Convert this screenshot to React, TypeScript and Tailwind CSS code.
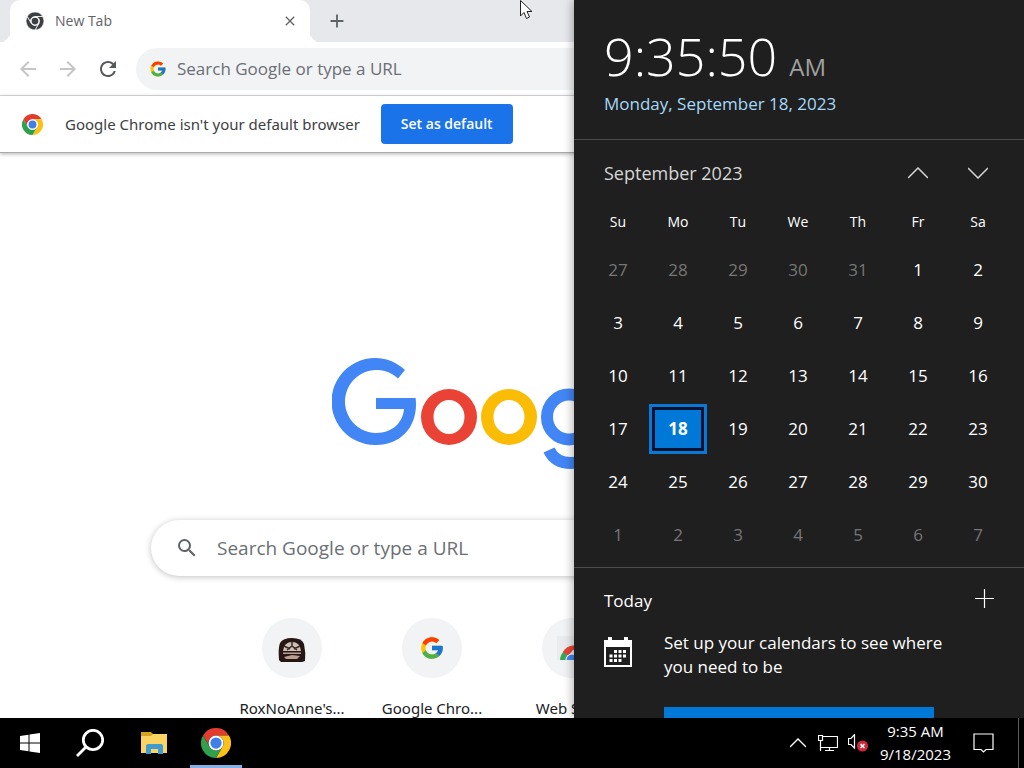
import type { ReactNode } from "react";
import { FcGoogle } from "react-icons/fc";
import { MdArrowBack, MdArrowForward, MdRefresh, MdSearch, MdClose, MdAdd } from "react-icons/md";

const WEEKDAYS = ["Su", "Mo", "Tu", "We", "Th", "Fr", "Sa"];

const WEEKS = [
  [27, 28, 29, 30, 31, 1, 2],
  [3, 4, 5, 6, 7, 8, 9],
  [10, 11, 12, 13, 14, 15, 16],
  [17, 18, 19, 20, 21, 22, 23],
  [24, 25, 26, 27, 28, 29, 30],
  [1, 2, 3, 4, 5, 6, 7],
];

function ChromeLogo({ className, mono = false }: { className?: string; mono?: boolean }) {
  const [red, yellow, green, blue] = mono
    ? ["#3c4043", "#3c4043", "#3c4043", "#3c4043"]
    : ["#e33b2e", "#fbc116", "#2da14c", "#3f7fe8"];
  const gap = mono ? { stroke: "#fff", strokeWidth: 2 } : {};
  return (
    <svg viewBox="0 0 48 48" className={className} aria-hidden="true">
      <path fill={red} {...gap} d="M24 12H44.8A24 24 0 0 0 3.2 12L13.6 30A12 12 0 0 1 24 12Z" />
      <path fill={yellow} {...gap} d="M34.4 30L24 48A24 24 0 0 0 44.8 12H24A12 12 0 0 1 34.4 30Z" />
      <path fill={green} {...gap} d="M13.6 30L3.2 12A24 24 0 0 0 24 48L34.4 30A12 12 0 0 1 13.6 30Z" />
      <circle cx="24" cy="24" r={mono ? 11 : 12} fill="#fff" />
      <circle cx="24" cy="24" r="9" fill={blue} />
    </svg>
  );
}

function GoogleLogo() {
  return (
    <svg viewBox="0 0 340 115" className="w-[340px] h-[115px] shrink-0" role="img" aria-label="Google">
      <path
        fill="#4285f4"
        d="M73 13A43.5 43.5 0 1 0 44 88C68 88 84 71 84 47.500Q84 44 83.600 41H44V52H72C71 65 61 76 44 76A31.500 31.500 0 1 1 66 21.500Z"
      />
      <path
        fill="#ea4335"
        fillRule="evenodd"
        d="M89 60a28 28 0 1 0 56 0a28 28 0 1 0-56 0M101.500 60a15.500 17 0 1 1 31 0a15.500 17 0 1 1-31 0"
      />
      <path
        fill="#fbbc05"
        fillRule="evenodd"
        d="M149 60a28 28 0 1 0 56 0a28 28 0 1 0-56 0M161.500 60a15.500 17 0 1 1 31 0a15.500 17 0 1 1-31 0"
      />
      <g fill="none" stroke="#4285f4" strokeWidth="12">
        <ellipse cx="237" cy="60" rx="22" ry="22.500" />
        <path d="M260 34V84C260 98 252 106 239 106Q223 106 217 93" />
      </g>
      <path stroke="#34a853" strokeWidth="12" d="M281 3V86" />
      <path fill="none" stroke="#ea4335" strokeWidth="12" d="M300 68L333 53A21 22 0 1 0 334 75" />
    </svg>
  );
}

function Shortcut({ label, children }: { label: string; children: ReactNode }) {
  return (
    <a href="#" className="flex flex-col items-center gap-5 font-['Noto_Sans',sans-serif] text-[15px] leading-5 text-[#202124]">
      <span className="flex h-15 w-15 items-center justify-center rounded-full bg-[#f1f3f4]">{children}</span>
      <span className="whitespace-nowrap">{label}</span>
    </a>
  );
}

function Browser() {
  return (
    <div className="flex h-full flex-col bg-white">
      {/* Tab strip */}
      <div className="flex h-[42px] shrink-0 items-end bg-[#e7e8eb] pl-2.5">
        <div className="relative flex h-full w-[300px] items-center rounded-t-[10px] bg-white pl-4 pr-3 before:absolute before:-left-2.5 before:bottom-0 before:h-2.5 before:w-2.5 before:rounded-br-[10px] before:bg-[#e7e8eb] before:shadow-[4px_4px_0_#fff] after:absolute after:-right-2.5 after:bottom-0 after:h-2.5 after:w-2.5 after:rounded-bl-[10px] after:bg-[#e7e8eb] after:shadow-[-4px_4px_0_#fff]">
          <ChromeLogo mono className="h-[18px] w-[18px]" />
          <span className="ml-[11px] flex-1 text-sm text-[#5f6368]">New Tab</span>
          <button aria-label="Close tab" className="text-[#5f6368]">
            <MdClose className="h-4 w-4" />
          </button>
        </div>
        <button aria-label="New tab" className="flex h-full w-[54px] items-center justify-center text-[#5f6368]">
          <MdAdd className="h-[22px] w-[22px]" />
        </button>
      </div>

      {/* Toolbar */}
      <div className="z-10 flex h-[54px] shrink-0 items-center border-b border-[#dadce0] bg-white pl-4 pr-2.5">
        <div className="flex w-30 items-center gap-4">
          <button aria-label="Back" className="text-[#c4c6c8]">
            <MdArrowBack className="h-6 w-6" />
          </button>
          <button aria-label="Forward" className="text-[#c4c6c8]">
            <MdArrowForward className="h-6 w-6" />
          </button>
          <button aria-label="Reload" className="text-[#55585c]">
            <MdRefresh className="h-6 w-6" />
          </button>
        </div>
        <div className="flex h-[42px] flex-1 items-center gap-2.5 rounded-full bg-[#f1f3f4] px-[13px]">
          <FcGoogle className="h-[18px] w-[18px]" />
          <input
            type="text"
            aria-label="Address bar"
            placeholder="Search Google or type a URL"
            className="flex-1 bg-transparent text-[17px] outline-none placeholder:text-[#6b6f74]"
          />
        </div>
      </div>

      {/* Default browser prompt */}
      <div className="z-10 flex h-[57px] shrink-0 items-center border-b border-[#aaa] bg-white pl-[22px] shadow-[0_1px_4px_rgba(0,0,0,0.3)]">
        <ChromeLogo className="h-[21px] w-[21px]" />
        <p className="ml-[22px] font-['Noto_Sans',sans-serif] text-[15px] text-[#3c4043]">
          Google Chrome isn't your default browser
        </p>
        <button className="ml-[21px] h-10 rounded bg-[#1a73e8] px-5 text-sm font-semibold text-white">Set as default</button>
      </div>

      {/* New tab page */}
      <div className="flex flex-1 flex-col items-center pr-5 pt-[204px]">
        <GoogleLogo />
        <div className="mt-12 flex h-14 w-[702px] shrink-0 items-center gap-[18px] rounded-full bg-white px-6 shadow-[0_1px_6px_rgba(32,33,36,0.28)]">
          <MdSearch className="h-6 w-6 text-[#5f6368]" />
          <input
            type="text"
            aria-label="Search"
            placeholder="Search Google or type a URL"
            className="flex-1 bg-transparent text-[19px] outline-none placeholder:text-[#6b6f74]"
          />
        </div>
        <div className="mt-[42px] grid w-[560px] grid-cols-4">
          <Shortcut label="RoxNoAnne's...">
            <svg viewBox="0 0 28 24" className="mt-1 h-6 w-7" aria-hidden="true">
              <path fill="#261714" d="M2 5Q5 0 14 0Q24 0 26 6Q28 15 27 23L24 24H3L1 22Q0 10 2 5Z" />
              <path fill="#cdbfb5" d="M5 13Q6 4 14 4Q22 4 23 13Z" />
              <path fill="none" stroke="#3b2a26" strokeWidth="1.500" d="M6 8l6 3M22 8l-6 3M14 3v5M9 12l5-4l5 4" />
              <path fill="#b99f90" d="M5 14.500h18v1.500H5zM6 19l8-2 8 1-3 3H8z" />
            </svg>
          </Shortcut>
          <Shortcut label="Google Chro...">
            <FcGoogle className="h-[26px] w-[26px]" />
          </Shortcut>
          <Shortcut label="Web Store">
            <svg viewBox="0 0 30 24" className="h-6 w-[30px]" aria-hidden="true">
              <path fill="#e9ebed" d="M0 0H30V24H0Z" />
              <path fill="#34a853" d="M3 24a12 13 0 0 1 4-9l6 9z" />
              <path fill="#ea4335" d="M6 16a12 12 0 0 1 20-2H16l-5 6z" />
              <circle cx="15" cy="24" r="6.500" fill="#fff" />
              <path fill="#4285f4" d="M9.500 24a5.500 5.500 0 0 1 11 0z" />
            </svg>
          </Shortcut>
        </div>
      </div>
    </div>
  );
}

function Flyout() {
  return (
    <aside className="h-full overflow-hidden bg-[#1f1f1f] text-white">
      <section className="h-[140px] border-b border-[#4c4c4c] pl-[30px] pt-5">
        <div className="flex items-baseline gap-3">
          <span className="text-[52px] font-light leading-[72px]">9:35:50</span>
          <span className="text-2xl text-[#a0a0a0]">AM</span>
        </div>
        <a href="#" className="block text-[17px] leading-6 text-[#a6d8f8]">Monday, September 18, 2023</a>
      </section>

      <section className="h-[428px] border-b border-[#4c4c4c] pl-3.5 pr-4">
        <div className="flex h-[66px] items-center pl-4">
          <button className="flex-1 text-left text-lg text-[#d6d6d6]">September 2023</button>
          <button aria-label="Previous month" className="flex w-15 justify-center">
            <svg viewBox="0 0 20 12" className="h-3 w-5" fill="none" stroke="#d6d6d6" strokeWidth="1.5">
              <path d="M0 11L10 1L20 11" />
            </svg>
          </button>
          <button aria-label="Next month" className="flex w-15 justify-center">
            <svg viewBox="0 0 20 12" className="h-3 w-5" fill="none" stroke="#d6d6d6" strokeWidth="1.5">
              <path d="M0 1L10 11L20 1" />
            </svg>
          </button>
        </div>
        <table className="w-full table-fixed border-collapse text-center">
          <thead>
            <tr>
              {WEEKDAYS.map((day) => (
                <th key={day} className="h-[37px] p-0 pb-1.5 text-sm font-normal">{day}</th>
              ))}
            </tr>
          </thead>
          <tbody>
            {WEEKS.map((week, row) => (
              <tr key={row}>
                {week.map((day) => {
                  const outside = (row === 0 && day > 20) || row === 5;
                  const today = row === 3 && day === 18;
                  return (
                    <td key={day} className="h-[53px] p-0">
                      <button
                        className={
                          today
                            ? "h-[50px] w-[58px] border-3 border-[#0a78d4] bg-[#0078d7] align-middle text-[17px] font-bold ring-3 ring-inset ring-[#04122e]"
                            : outside
                            ? "h-[50px] w-[58px] align-middle text-[17px] text-[#767676]"
                            : "h-[50px] w-[58px] align-middle text-[17px]"
                        }
                      >
                        {day}
                      </button>
                    </td>
                  );
                })}
              </tr>
            ))}
          </tbody>
        </table>
      </section>

      <section className="px-[30px] pt-[18px]">
        <div className="flex items-start justify-between">
          <h2 className="text-[17px] leading-[30px]">Today</h2>
          <button aria-label="New event" className="pt-[3px]">
            <svg viewBox="0 0 20 20" className="h-5 w-5" stroke="#fff" strokeWidth="1.200">
              <path d="M1 9.500H20M10.500 0V19" />
            </svg>
          </button>
        </div>
        <div className="mt-[15px] flex gap-8">
          <svg viewBox="0 0 28 30" className="mt-1.5 h-[30px] w-7 shrink-0" aria-hidden="true">
            <path fill="#fff" fillRule="evenodd" d="M0 3H4V0H8V3H20V0H24V3H28V30H0ZM2 10V28H26V10Z" />
            <path
              fill="#fff"
              d="M10 13h3v3h-3zM14.500 13h3v3h-3zM19 13h3v3h-3zM5.500 17.500h3v3h-3zM10 17.500h3v3h-3zM14.500 17.500h3v3h-3zM19 17.500h3v3h-3zM5.500 22h3v3h-3zM10 22h3v3h-3zM14.500 22h3v3h-3z"
            />
          </svg>
          <div>
            <p className="w-[290px] text-[17px] leading-6">Set up your calendars to see where you need to be</p>
            <button aria-label="Get started" className="mt-7 block h-10 w-[270px] bg-[#0078d7]" />
          </div>
        </div>
      </section>
    </aside>
  );
}

function Taskbar() {
  return (
    <footer className="z-20 flex h-[50px] shrink-0 items-stretch bg-black text-white">
      <button aria-label="Start" className="flex w-15 items-center justify-center">
        <svg viewBox="0 0 20 20" className="h-5 w-5" fill="#fff">
          <path d="M0 3L8.500 1.700V9.500H0ZM9.500 1.500L20 0V9.500H9.500ZM0 10.500H8.500V18.300L0 17ZM9.500 10.500H20V20L9.500 18.500Z" />
        </svg>
      </button>
      <button aria-label="Search" className="flex w-15 items-center justify-center">
        <svg viewBox="0 0 28 28" className="h-7 w-7" fill="none" stroke="#fff" strokeWidth="2.800">
          <circle cx="17" cy="11" r="9.700" />
          <path d="M10 18L1 27" />
        </svg>
      </button>
      <button aria-label="File Explorer" className="flex w-17 items-center justify-center">
        <svg viewBox="0 0 26 22" className="h-[22px] w-[26px]">
          <path fill="#d9a521" d="M0 0H10L13 3V6H0Z" />
          <path fill="#fcd462" d="M0 4H10L12 2H26V21H0Z" />
          <path fill="#3f9bd0" d="M5 22V14Q5 12 7 12H20Q22 12 22 14V22H17V17H10V22Z" />
        </svg>
      </button>
      <button
        aria-label="Google Chrome"
        className="ml-0.5 flex w-[52px] items-center justify-center border-b-3 border-[#82b1e8] pt-[3px]"
      >
        <ChromeLogo className="h-[30px] w-[30px]" />
      </button>
      <div className="flex flex-1 items-center justify-end">
        <button aria-label="Show hidden icons">
          <svg viewBox="0 0 16 10" className="h-2.5 w-4" fill="none" stroke="#fff" strokeWidth="1.300">
            <path d="M0 9L8 1L16 9" />
          </svg>
        </button>
        <button aria-label="Network" className="ml-3">
          <svg viewBox="0 0 20 17" className="h-[17px] w-5" fill="none" stroke="#fff" strokeWidth="1.200">
            <path d="M5 1.500H19.500V12.500H3M0.500 0.500H4.500V5.500H0.500ZM2.500 5.500V16M11.500 12.500V15.500M7 15.500H16" />
          </svg>
        </button>
        <button aria-label="Volume" className="ml-2.5">
          <svg viewBox="0 0 20 18" className="h-[18px] w-5" fill="none" stroke="#fff" strokeWidth="1.200">
            <path d="M0.500 4.500H3L6.500 0.500V14L3 10.500H0.500Z" />
            <circle cx="14.500" cy="12" r="5.500" fill="#cf2a3c" stroke="none" />
            <path strokeWidth="1.500" d="M12.500 10L16.500 14M16.500 10L12.500 14" />
          </svg>
        </button>
        <div className="ml-3 text-center text-[15px] leading-[23px]">
          <div>9:35 AM</div>
          <div>9/18/2023</div>
        </div>
        <button aria-label="Notifications" className="ml-[22px] mr-6">
          <svg viewBox="0 0 21 20" className="h-5 w-[21px]" fill="none" stroke="#fff" strokeWidth="1.200">
            <path d="M1 1H20V16.500H13L10.500 19L8 16.500H1Z" />
          </svg>
        </button>
        <button aria-label="Show desktop" className="h-full w-1.5 border-l border-[#5a5a5a]" />
      </div>
    </footer>
  );
}

export default function App() {
  return (
    <div className="flex h-screen flex-col overflow-hidden font-['Open_Sans','Noto_Sans',sans-serif]">
      <main className="relative min-h-0 flex-1 overflow-hidden">
        <Browser />
        <div className="absolute inset-y-0 right-0 z-20 w-[450px] shadow-[0_0_10px_rgba(0,0,0,0.4)]">
          <Flyout />
        </div>
        {/* Mouse pointer */}
        <svg viewBox="0 0 13 20" className="absolute left-[520px] top-0 z-30 h-5 w-[13px]" aria-hidden="true">
          <path fill="#fff" stroke="#222" d="M0.500 0.500V16L4 12.500L6.500 18.500L9.500 17L7 11.500H12Z" />
        </svg>
      </main>
      <Taskbar />
    </div>
  );
}
